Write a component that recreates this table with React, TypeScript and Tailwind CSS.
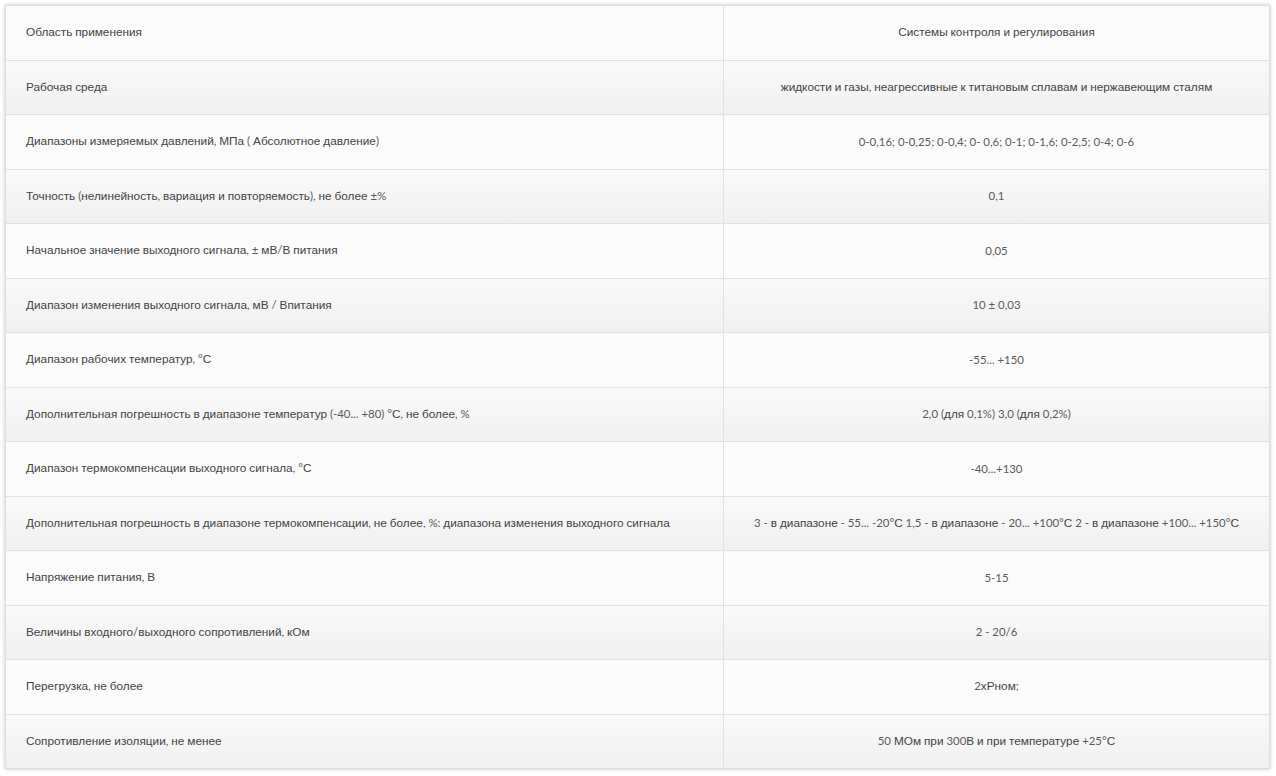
import React from "react";

const rows: [string, string][] = [
  ["Область применения", "Системы контроля и регулирования"],
  ["Рабочая среда", "жидкости и газы, неагрессивные к титановым сплавам и нержавеющим сталям"],
  ["Диапазоны измеряемых давлений, МПа ( Абсолютное давление)", "0-0,16; 0-0,25; 0-0,4; 0- 0,6; 0-1; 0-1,6; 0-2,5; 0-4; 0-6"],
  ["Точность (нелинейность, вариация и повторяемость), не более ±%", "0,1"],
  ["Начальное значение выходного сигнала, ± мВ/В питания", "0,05"],
  ["Диапазон изменения выходного сигнала, мВ / Впитания", "10 ± 0,03"],
  ["Диапазон рабочих температур, °С", "-55... +150"],
  ["Дополнительная погрешность в диапазоне температур (-40... +80) °С, не более, %", "2,0 (для 0,1%) 3,0 (для 0,2%)"],
  ["Диапазон термокомпенсации выходного сигнала, °С", "-40...+130"],
  [
    "Дополнительная погрешность в диапазоне термокомпенсации, не более, %: диапазона изменения выходного сигнала",
    "3 - в диапазоне - 55... -20°С 1,5 - в диапазоне - 20... +100°С 2 - в диапазоне +100... +150°С",
  ],
  ["Напряжение питания, В", "5-15"],
  ["Величины входного/выходного сопротивлений, кОм", "2 - 20/6"],
  ["Перегрузка, не более", "2хРном;"],
  ["Сопротивление изоляции, не менее", "50 МОм при 300В и при температуре +25°С"],
];

function Mixed({ text }: { text: string }) {
  const parts = text.split(/([\u0400-\u04FF]+)/);
  return (
    <span className="whitespace-pre">
      {parts.map((p, i) =>
        p === "" ? null : /[\u0400-\u04FF]/.test(p) ? (
          <span key={i} className="font-['Liberation_Sans',Arial,sans-serif]">
            {p}
          </span>
        ) : (
          <span key={i} className="font-['Lato','Liberation_Sans',sans-serif] text-[11.4px] text-[#5a5a5a]">
            {p}
          </span>
        )
      )}
    </span>
  );
}

export default function App() {
  return (
    <div className="min-h-[776px] w-[1276px] bg-white px-[5px] pt-[5px] pr-[6px]">
      <div className="flex flex-col border border-[#dcdcdc] shadow-[0_0_4px_rgba(0,0,0,0.22)] text-[11.8px] text-[#444]">
        {rows.map(([a, b], i) => (
          <div
            key={i}
            className={
              "flex " +
              (i === 0 ? "h-[53.5px] " : "h-[54.5px] border-t border-[#e2e2e2] ") +
              (i % 2 === 0
                ? "bg-[#fbfbfb]"
                : "bg-gradient-to-b from-[#f9f9f9] to-[#f1f1f1]")
            }
          >
            <div className="flex w-[718px] shrink-0 items-center border-r border-[#e2e2e2] pl-[20px] leading-none">
              <Mixed text={a} />
            </div>
            <div className="flex flex-1 items-center justify-center leading-none">
              <Mixed text={b} />
            </div>
          </div>
        ))}
      </div>
    </div>
  );
}
